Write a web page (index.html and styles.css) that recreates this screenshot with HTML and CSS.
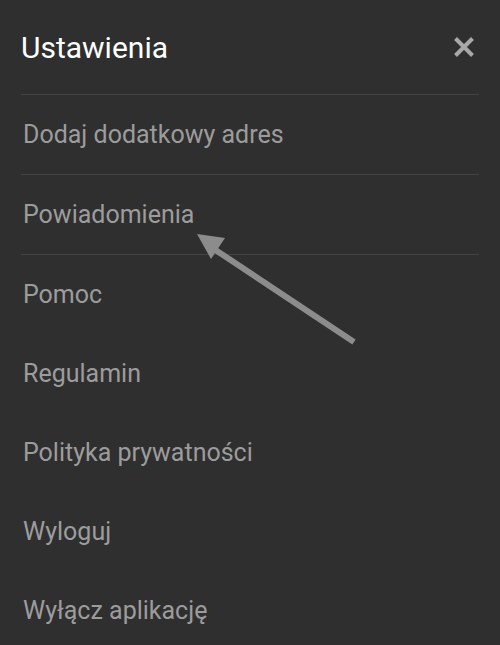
FILE: index.html
```html
<!DOCTYPE html>
<html lang="pl">
<head>
<meta charset="utf-8">
<title>Ustawienia</title>
<link rel="stylesheet" href="styles.css">
</head>
<body>
<div class="panel">
  <header class="header">
    <h1 class="title">Ustawienia</h1>
    <button class="close" aria-label="Zamknij">
      <svg width="22" height="22" viewBox="0 0 22 22"><path d="M2.5 2.5 L19.5 19.5 M19.5 2.5 L2.5 19.5" stroke="#a8a8a8" stroke-width="4" stroke-linecap="butt"/></svg>
    </button>
  </header>
  <ul class="menu">
    <li class="item sep">Dodaj dodatkowy adres</li>
    <li class="item sep">Powiadomienia</li>
    <li class="item">Pomoc</li>
    <li class="item">Regulamin</li>
    <li class="item">Polityka prywatności</li>
    <li class="item">Wyloguj</li>
    <li class="item">Wyłącz aplikację</li>
  </ul>
  <svg class="arrow" width="500" height="645" viewBox="0 0 500 645">
    <line x1="354" y1="342" x2="214" y2="249" stroke="#8c8c8c" stroke-width="6"/>
    <polygon points="197,234 225,238 211,259" fill="#8c8c8c"/>
  </svg>
</div>
</body>
</html>
```
FILE: styles.css
```css
html, body {
  margin: 0;
  padding: 0;
  background: #2f2f2f;
}
body {
  font-family: Roboto, "Noto Sans", sans-serif;
}
.panel {
  position: relative;
  width: 500px;
  height: 645px;
  overflow: hidden;
  background: #2f2f2f;
}
.header {
  display: flex;
  align-items: center;
  justify-content: space-between;
  height: 94px;
  margin: 0 21px;
  border-bottom: 1px solid #444444;
}
.title {
  margin: 0;
  font-size: 30px;
  font-weight: 400;
  color: #ffffff;
}
.close {
  background: none;
  border: 0;
  padding: 0;
  margin-right: 4px;
  display: flex;
}
.menu {
  list-style: none;
  margin: 0 21px;
  padding: 0;
}
.item {
  height: 79px;
  display: flex;
  align-items: center;
  padding-left: 2px;
  font-size: 25px;
  color: #9c9c9c;
}
.item.sep {
  border-bottom: 1px solid #444444;
}
.arrow {
  position: absolute;
  left: 0;
  top: 0;
  pointer-events: none;
}
```
